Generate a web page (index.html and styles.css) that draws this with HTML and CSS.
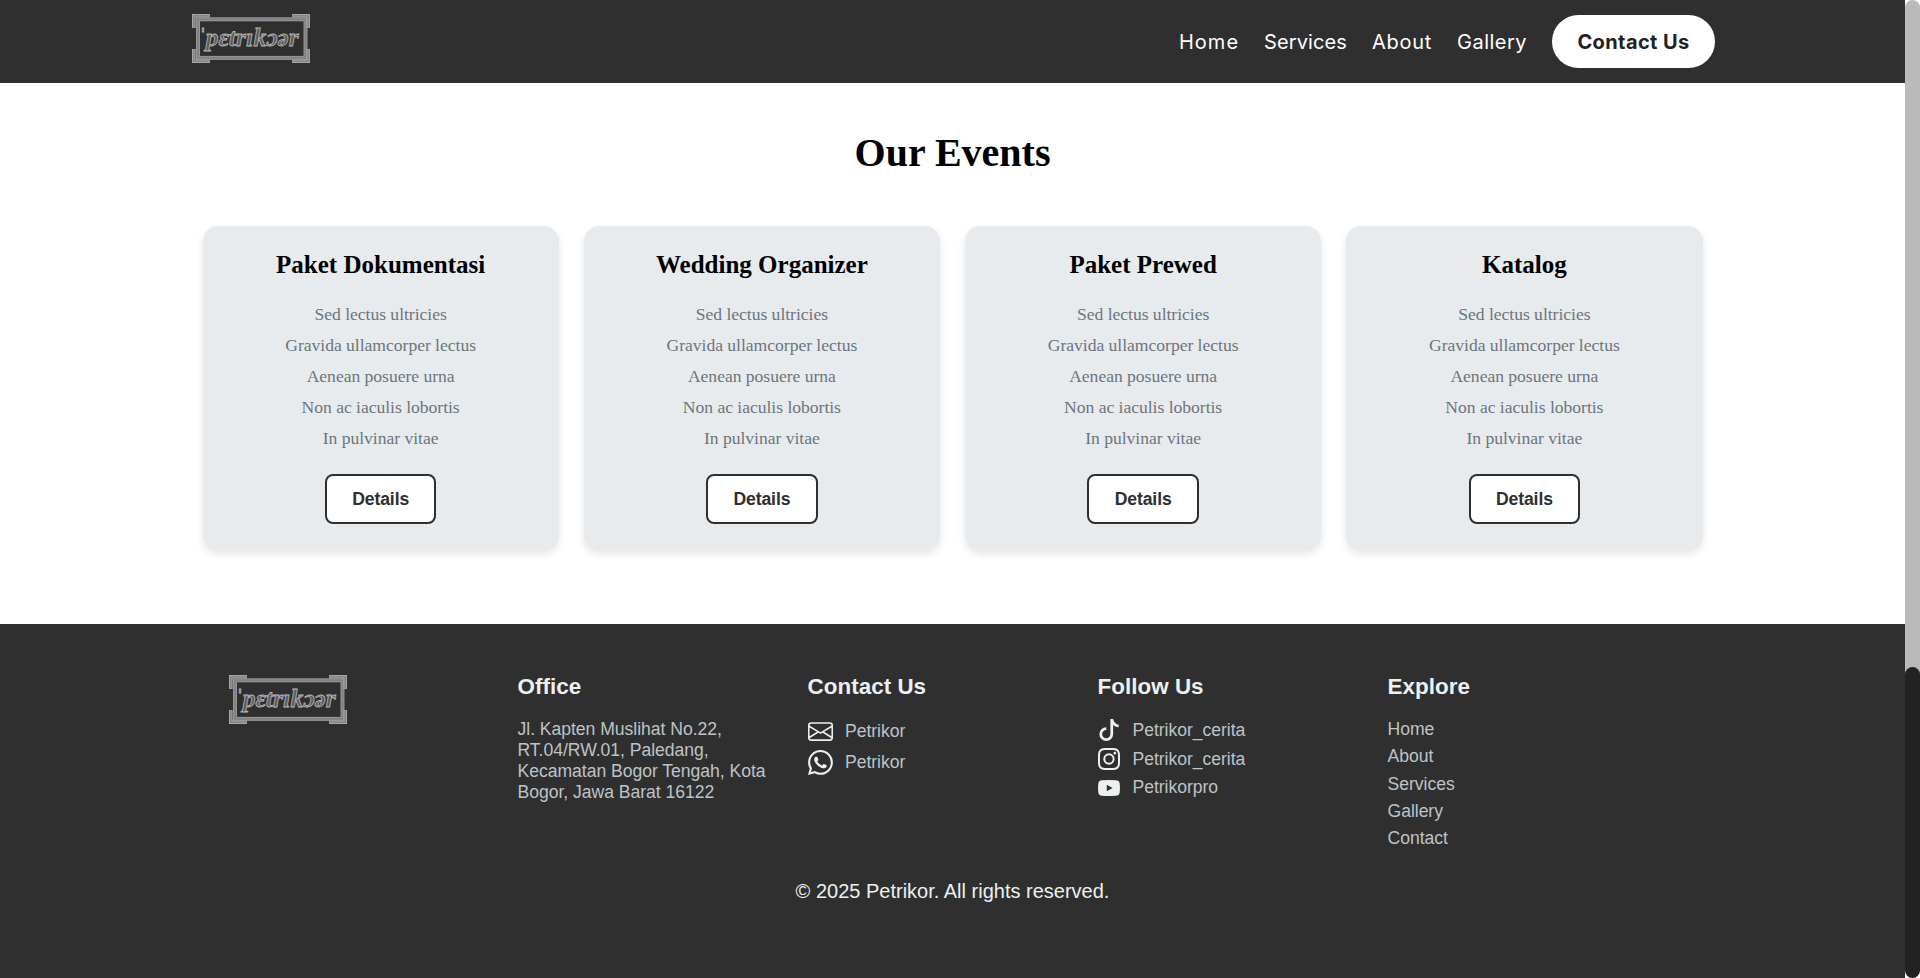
FILE: index.html
```html
<!DOCTYPE html>
<html lang="id">
<head>
<meta charset="utf-8">
<title>Petrikor - Our Events</title>
<link rel="stylesheet" href="styles.css">
</head>
<body>
<div class="window">
  <div class="page">
    <header class="header">
      <svg class="logo" viewBox="0 0 118 49">
        <rect class="frame-edge" x="6" y="5.3" width="107.5" height="38.6"/>
        <rect class="frame-core" x="6" y="5.3" width="107.5" height="38.6"/>
        <path class="corner-edge" d="M1.8 14V1.8H18M100 1.8h16.2V14M116.2 35v12.2H100M18 47.2H1.8V35"/>
        <path class="corner-core" d="M1.8 13.5V1.8H17.5M100.5 1.8h15.7V13.5M116.2 35.5v11.7H100.5M17.5 47.2H1.8V35.5"/>
        <text class="logo-text" x="5.2" y="31.5" textLength="101.5" lengthAdjust="spacingAndGlyphs">ˈpɛtrɪkɔər</text>
      </svg>
      <nav class="nav">
        <a class="nav-link nav-home">Home</a>
        <a class="nav-link nav-services">Services</a>
        <a class="nav-link nav-about">About</a>
        <a class="nav-link nav-gallery">Gallery</a>
        <a class="nav-button">Contact Us</a>
      </nav>
    </header>
    <main class="events">
      <h1 class="events-title">Our Events</h1>
      <div class="cards">
        <article class="card">
          <h3 class="card-title">Paket Dokumentasi</h3>
          <ul class="card-list"><li>Sed lectus ultricies</li><li>Gravida ullamcorper lectus</li><li>Aenean posuere urna</li><li>Non ac iaculis lobortis</li><li>In pulvinar vitae</li></ul>
          <a class="card-button">Details</a>
        </article>
        <article class="card">
          <h3 class="card-title">Wedding Organizer</h3>
          <ul class="card-list"><li>Sed lectus ultricies</li><li>Gravida ullamcorper lectus</li><li>Aenean posuere urna</li><li>Non ac iaculis lobortis</li><li>In pulvinar vitae</li></ul>
          <a class="card-button">Details</a>
        </article>
        <article class="card">
          <h3 class="card-title">Paket Prewed</h3>
          <ul class="card-list"><li>Sed lectus ultricies</li><li>Gravida ullamcorper lectus</li><li>Aenean posuere urna</li><li>Non ac iaculis lobortis</li><li>In pulvinar vitae</li></ul>
          <a class="card-button">Details</a>
        </article>
        <article class="card">
          <h3 class="card-title">Katalog</h3>
          <ul class="card-list"><li>Sed lectus ultricies</li><li>Gravida ullamcorper lectus</li><li>Aenean posuere urna</li><li>Non ac iaculis lobortis</li><li>In pulvinar vitae</li></ul>
          <a class="card-button">Details</a>
        </article>
      </div>
    </main>
    <footer class="footer">
      <div class="footer-grid">
        <div class="footer-brand">
          <svg class="logo" viewBox="0 0 118 49">
            <rect class="frame-edge" x="6" y="5.3" width="107.5" height="38.6"/>
            <rect class="frame-core" x="6" y="5.3" width="107.5" height="38.6"/>
            <path class="corner-edge" d="M1.8 14V1.8H18M100 1.8h16.2V14M116.2 35v12.2H100M18 47.2H1.8V35"/>
            <path class="corner-core" d="M1.8 13.5V1.8H17.5M100.5 1.8h15.7V13.5M116.2 35.5v11.7H100.5M17.5 47.2H1.8V35.5"/>
            <text class="logo-text" x="5.2" y="31.5" textLength="101.5" lengthAdjust="spacingAndGlyphs">ˈpɛtrɪkɔər</text>
          </svg>
        </div>
        <div class="footer-col">
          <h3 class="footer-title">Office</h3>
          <p class="address">Jl. Kapten Muslihat No.22, RT.04/RW.01, Paledang, Kecamatan Bogor Tengah, Kota Bogor, Jawa Barat 16122</p>
        </div>
        <div class="footer-col">
          <h3 class="footer-title">Contact Us</h3>
          <ul class="contact-list">
            <li><svg class="icon-lg" viewBox="0 0 16 16"><path d="M0 4a2 2 0 0 1 2-2h12a2 2 0 0 1 2 2v8a2 2 0 0 1-2 2H2a2 2 0 0 1-2-2zm2-1a1 1 0 0 0-1 1v.217l7 4.2 7-4.2V4a1 1 0 0 0-1-1zm13 2.383-4.708 2.825L15 11.105zm-.034 6.876-5.64-3.471L8 9.583l-1.326-.795-5.64 3.47A1 1 0 0 0 2 13h12a1 1 0 0 0 .966-.741M1 11.105l4.708-2.897L1 5.383z"/></svg>Petrikor</li>
            <li><svg class="icon-lg" viewBox="0 0 16 16"><path d="M13.601 2.326A7.85 7.85 0 0 0 7.994 0C3.627 0 .068 3.558.064 7.926c0 1.399.366 2.76 1.057 3.965L0 16l4.204-1.102a7.9 7.9 0 0 0 3.79.965h.004c4.368 0 7.926-3.558 7.93-7.93A7.9 7.9 0 0 0 13.6 2.326zM7.994 14.521a6.6 6.6 0 0 1-3.356-.92l-.24-.144-2.494.654.666-2.433-.156-.251a6.56 6.56 0 0 1-1.007-3.505c0-3.626 2.957-6.584 6.591-6.584a6.56 6.56 0 0 1 4.66 1.931 6.56 6.56 0 0 1 1.928 4.66c-.004 3.639-2.961 6.592-6.592 6.592m3.615-4.934c-.197-.099-1.17-.578-1.353-.646-.182-.065-.315-.099-.445.099-.133.197-.513.646-.627.775-.114.133-.232.148-.43.05-.197-.1-.836-.308-1.592-.985-.59-.525-.985-1.175-1.103-1.372-.114-.198-.011-.304.088-.403.087-.088.197-.232.296-.346.1-.114.133-.198.198-.33.065-.134.034-.248-.015-.347-.05-.099-.445-1.076-.612-1.47-.16-.389-.323-.335-.445-.34-.114-.007-.247-.007-.38-.007a.73.73 0 0 0-.529.247c-.182.198-.691.677-.691 1.654s.71 1.916.81 2.049c.098.133 1.394 2.132 3.383 2.992.47.205.84.326 1.129.418.475.152.904.129 1.246.08.38-.058 1.171-.48 1.338-.943.164-.464.164-.86.114-.943-.049-.084-.182-.133-.38-.232"/></svg>Petrikor</li>
          </ul>
        </div>
        <div class="footer-col">
          <h3 class="footer-title">Follow Us</h3>
          <ul class="follow-list">
            <li><svg class="icon-md" viewBox="0 0 16 16"><path d="M9 0h1.98c.144.715.54 1.617 1.235 2.512C12.895 3.389 13.797 4 15 4v2c-1.753 0-3.07-.814-4-1.829V11a5 5 0 1 1-5-5v2a3 3 0 1 0 3 3z"/></svg>Petrikor_cerita</li>
            <li><svg class="icon-md" viewBox="0 0 16 16"><path d="M8 0C5.829 0 5.556.01 4.703.048 3.85.088 3.269.222 2.76.42a3.9 3.9 0 0 0-1.417.923A3.9 3.9 0 0 0 .42 2.76C.222 3.268.087 3.85.048 4.7.01 5.555 0 5.827 0 8.001c0 2.172.01 2.444.048 3.297.04.852.174 1.433.372 1.942.205.526.478.972.923 1.417.444.445.89.719 1.416.923.51.198 1.09.333 1.942.372C5.555 15.99 5.827 16 8 16s2.444-.01 3.298-.048c.851-.04 1.434-.174 1.943-.372a3.9 3.9 0 0 0 1.416-.923c.445-.445.718-.891.923-1.417.197-.509.332-1.09.372-1.942C15.99 10.445 16 10.173 16 8s-.01-2.445-.048-3.299c-.04-.851-.175-1.433-.372-1.941a3.9 3.9 0 0 0-.923-1.417A3.9 3.9 0 0 0 13.24.42c-.51-.198-1.092-.333-1.943-.372C10.443.01 10.172 0 7.998 0zm-.717 1.442h.718c2.136 0 2.389.007 3.232.046.78.035 1.204.166 1.486.275.373.145.64.319.92.599s.453.546.598.92c.11.281.24.705.275 1.485.039.843.047 1.096.047 3.231s-.008 2.389-.047 3.232c-.035.78-.166 1.203-.275 1.485a2.5 2.5 0 0 1-.599.919c-.28.28-.546.453-.92.598-.28.11-.704.24-1.485.276-.843.038-1.096.047-3.232.047s-2.39-.009-3.233-.047c-.78-.036-1.203-.166-1.485-.276a2.5 2.5 0 0 1-.92-.598 2.5 2.5 0 0 1-.6-.92c-.109-.281-.24-.705-.275-1.485-.038-.843-.046-1.096-.046-3.233s.008-2.388.046-3.231c.036-.78.166-1.204.276-1.486.145-.373.319-.64.599-.92s.546-.453.92-.598c.282-.11.705-.24 1.485-.276.738-.034 1.024-.044 2.515-.045zm4.988 1.328a.96.96 0 1 0 0 1.92.96.96 0 0 0 0-1.92m-4.27 1.122a4.109 4.109 0 1 0 0 8.217 4.109 4.109 0 0 0 0-8.217m0 1.441a2.667 2.667 0 1 1 0 5.334 2.667 2.667 0 0 1 0-5.334"/></svg>Petrikor_cerita</li>
            <li><svg class="icon-md" viewBox="0 0 16 16"><path fill-rule="evenodd" d="M3 2.3Q8 1.9 13 2.3Q15.3 2.4 15.7 4.3Q16.2 8 15.7 11.7Q15.3 13.6 13 13.7Q8 14.1 3 13.7Q.7 13.6.3 11.7Q-.2 8 .3 4.3Q.7 2.4 3 2.3zM6.4 5.6v4.8L10.6 8z"/></svg>Petrikorpro</li>
          </ul>
        </div>
        <div class="footer-col">
          <h3 class="footer-title">Explore</h3>
          <ul class="explore-list"><li>Home</li><li>About</li><li>Services</li><li>Gallery</li><li>Contact</li></ul>
        </div>
      </div>
      <p class="copyright">© 2025 Petrikor. All rights reserved.</p>
    </footer>
  </div>
  <div class="scrollbar"><div class="thumb"></div></div>
</div>
</body>
</html>
```
FILE: styles.css
```css
* { box-sizing: border-box; margin: 0; padding: 0; }
body { font-family: "Liberation Serif", serif; background: #fff; overflow: hidden; }
ul { list-style: none; }
.window { display: flex; height: 978px; }
.page { width: 1905px; display: flex; flex-direction: column; }
.scrollbar { width: 15px; background: #b9babb; border-radius: 8px; display: flex; flex-direction: column; justify-content: flex-end; }
.thumb { height: 311px; background: #222; border-radius: 8px; }

.header { height: 83px; background: #2f2f2f; display: flex; justify-content: space-between; padding: 0 190px 0 192px; }
.logo { width: 118px; height: 49px; margin-top: 14px; display: block; }
.logo-text { font: italic bold 26px "Liberation Serif", "DejaVu Serif", serif; fill: #5c5c5c; stroke: #b8b8b8; stroke-width: .8px; }
.frame-edge, .frame-core, .corner-edge, .corner-core { fill: none; }
.frame-edge { stroke: #959595; stroke-width: 4; }
.frame-core { stroke: #828282; stroke-width: 2; }
.corner-edge { stroke: #a6a6a6; stroke-width: 3.6; }
.corner-core { stroke: #7c7c7c; stroke-width: 1.3; }
.nav { display: flex; align-items: center; gap: 25px; font-family: Inter, sans-serif; font-size: 20px; }
.nav-link { color: #fff; white-space: nowrap; }
.nav-home { width: 60px; letter-spacing: 1px; }
.nav-services { width: 83px; letter-spacing: .1px; }
.nav-about { width: 60px; letter-spacing: .7px; }
.nav-gallery { width: 70px; letter-spacing: .5px; }
.nav-button { width: 163px; height: 53px; border-radius: 27px; background: #fff; color: #222; font-weight: 700; text-align: center; line-height: 54px; letter-spacing: .4px; white-space: nowrap; }

.events { height: 541px; padding-top: 47px; }
.events-title { font-size: 40px; line-height: 46px; text-align: center; }
.cards { width: 1500px; margin: 50px auto 0; display: grid; grid-template-columns: repeat(4, 1fr); gap: 25px; }
.card { height: 323.5px; background: #e8ebee; border-radius: 15px; box-shadow: 0 4px 8px rgba(0,0,0,.1); padding-top: 25px; display: flex; flex-direction: column; align-items: center; }
.card-title { font-size: 25px; line-height: 28px; }
.card-list { margin-top: 20px; text-align: center; font-size: 17.6px; line-height: 31px; letter-spacing: -.03px; color: #6c757d; }
.card-button { margin-top: 20px; width: 111.5px; height: 50px; border: 2px solid #2f2f2f; border-radius: 8px; background: #fff; color: #2f2f2f; font: bold 17.6px/46px "Liberation Sans", sans-serif; letter-spacing: -.1px; text-align: center; }

.footer { flex: 1; background: #2f2f2f; font-family: "Liberation Sans", sans-serif; font-size: 17.6px; line-height: 21px; letter-spacing: -.04px; color: #bdc3c7; }
.footer-grid { height: 236px; padding: 50px 0 0 228px; display: grid; grid-template-columns: 289.5px repeat(4, 290px); }
.footer-brand .logo { margin: 1px 0 0 1px; }
.footer-title { font-size: 22.4px; line-height: 26px; letter-spacing: .04px; color: #ecf0f1; }
.address { width: 250px; margin-top: 19px; }
.contact-list, .follow-list { margin-top: 16px; }
.contact-list li { display: flex; align-items: center; gap: 12.5px; height: 31px; }
.follow-list li { display: flex; align-items: center; gap: 13px; height: 28.7px; }
.explore-list { margin-top: 16px; }
.explore-list li { height: 27.3px; line-height: 27px; }
.icon-lg { width: 25px; height: 25px; fill: #ecf0f1; }
.icon-md { width: 22px; height: 22px; fill: #ecf0f1; }
.copyright { margin-top: 20px; font-size: 20px; line-height: 23px; letter-spacing: 0; color: #ecf0f1; text-align: center; }
```
